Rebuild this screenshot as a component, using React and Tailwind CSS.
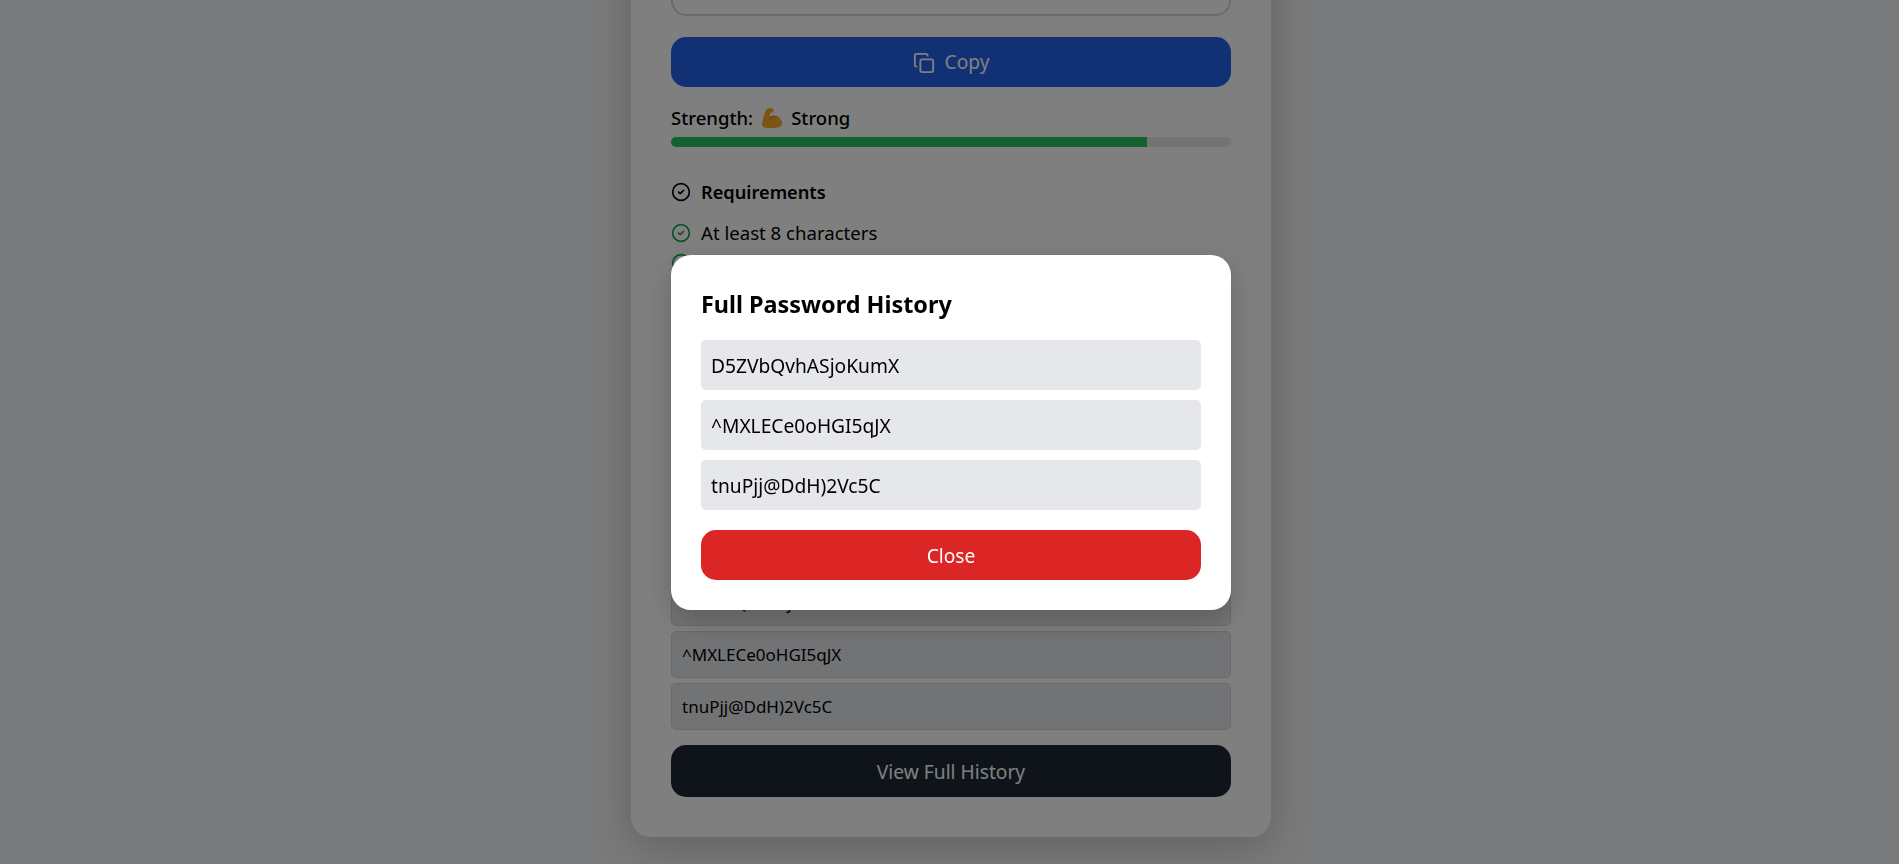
import React from "react";
import { Copy, CircleCheck } from "lucide-react";

const reqs = ["At least 8 characters", "Contains uppercase letter", "Contains lowercase letter", "Contains a number", "Contains a special character"];
const passwords = ["D5ZVbQvhASjoKumX", "^MXLECe0oHGI5qJX", "tnuPjj@DdH)2Vc5C"];

function Biceps() {
  return (
    <svg width="22" height="22" viewBox="0 0 20 20" className="shrink-0">
      <path d="M6 1.5C8 .5 11 1 11.500 3c.3 1.500-1.500 2.500-3 2.300L8 9c2-1.500 6-1.500 8.500.5 2.500 2 3 5 2.500 6.500C18.500 18 16 19 13 19H5c-2.500 0-4.500-1.500-4-4 .5-4 2-9 3.500-12 .5-1 1-1.200 1.500-1.500Z" fill="#f8aa2c" />
      <path d="M8 9c2-1.500 6-1.500 8.500.5-2-.5-5.500-.5-7.500 1.500-.8.8-1.500 1.500-2 2.500L8 9Z" fill="#e0901f" />
    </svg>
  );
}

export default function App() {
  return (
    <div className="relative h-[864px] overflow-hidden bg-[#f3f4f6] font-['Noto_Sans',sans-serif] text-black">
      <div className="flex h-full flex-col items-center justify-end pb-[27px] pl-[3px]">
        <div className="w-[640px] shrink-0 rounded-[20px] bg-white p-10 shadow-[0_10px_40px_rgba(0,0,0,0.2)]">
          <div className="h-[50px] rounded-[15px] border-2 border-gray-300" />
          <button className="mt-[21px] flex h-[50px] w-full items-center justify-center gap-2.5 rounded-[15px] bg-[#2563eb] pt-[1px] text-[19.2px] text-white">
            <Copy size={22} strokeWidth={2} />
            Copy
          </button>
          <div className="mt-[19px] flex items-center gap-2 text-[18.5px] font-medium leading-[24px]">
            <span>Strength:</span>
            <Biceps />
            <span>Strong</span>
          </div>
          <div className="mt-[7px] h-[10px] w-full overflow-hidden rounded-[5px] bg-[#e5e7eb]">
            <div className="h-full w-[85%] bg-[#22c55e]" />
          </div>
          <div className="mt-[33px] flex items-center gap-2.5 text-[18.2px] font-semibold leading-[24px]">
            <CircleCheck size={20} className="shrink-0" />
            Requirements
          </div>
          <ul className="mt-[14px] flex flex-col">
            {reqs.map((r) => (
              <li key={r} className="flex h-[30px] items-center gap-2.5 text-[18.6px]">
                <CircleCheck size={20} className="shrink-0 text-[#16a34a]" />
                {r}
              </li>
            ))}
          </ul>
          <div className="mt-[171px] text-[18px] font-semibold leading-[30px]">Recent Passwords</div>
          <div className="mt-2.5 flex flex-col gap-[5px]">
            {passwords.map((p) => (
              <div key={p} className="flex h-[47px] items-center rounded-[5px] border border-[#d1d5db] bg-[#e5e7eb] px-2.5 pt-[1px] text-[17px]">
                {p}
              </div>
            ))}
          </div>
          <button className="mt-[15px] h-[52px] w-full rounded-[15px] bg-[#1f2937] pt-[2px] text-[19.2px] text-white">View Full History</button>
        </div>
      </div>

      <div className="fixed inset-0 flex items-center justify-center bg-black/50 pl-[3px]">
        <div className="w-[560px] rounded-[20px] bg-white p-[30px] shadow-[0_10px_30px_rgba(0,0,0,0.2)]">
          <h2 className="pt-[4px] text-[23.4px] font-bold leading-[31px]">Full Password History</h2>
          <div className="mt-[20px] flex flex-col gap-2.5">
            {passwords.map((p) => (
              <div key={p} className="flex h-[50px] items-center rounded-[5px] bg-[#e5e7eb] px-2.5 pt-[4px] text-[19.2px]">
                {p}
              </div>
            ))}
          </div>
          <button className="mt-5 h-[50px] w-full rounded-[15px] bg-[#dc2626] pt-[4px] text-[19.2px] text-white">Close</button>
        </div>
      </div>
    </div>
  );
}
